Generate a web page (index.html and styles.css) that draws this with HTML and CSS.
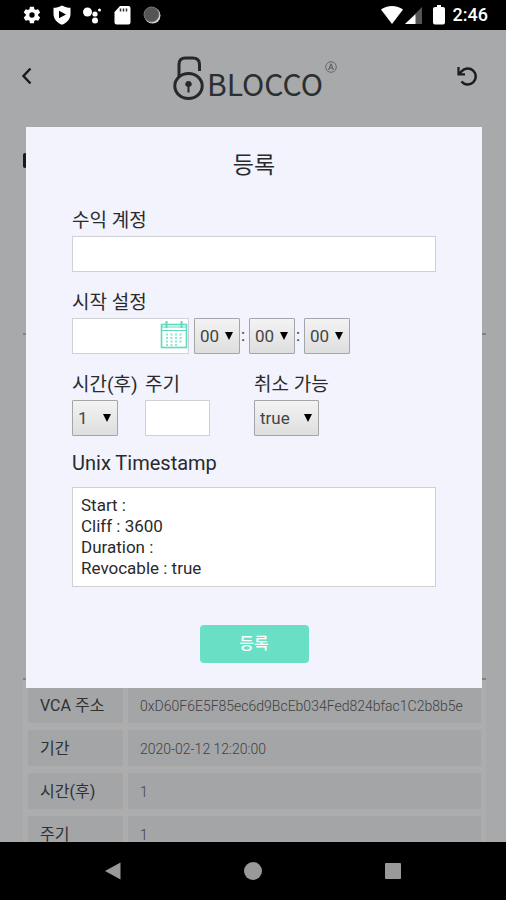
FILE: index.html
```html
<!DOCTYPE html>
<html lang="ko">
<head>
<meta charset="utf-8">
<meta name="viewport" content="width=device-width, initial-scale=1">
<title>BLOCCO</title>
<link rel="stylesheet" href="styles.css">
</head>
<body>
<div class="status">
  <div class="status-icons">
    <svg width="20" height="20" viewBox="0 0 24 24" fill="#fff"><path d="M19.4 13a7.500 7.500 0 0 0 0-2l2.100-1.600a.5.5 0 0 0 .1-.6l-2-3.500a.5.5 0 0 0-.6-.2l-2.500 1a7.300 7.300 0 0 0-1.700-1l-.4-2.600a.5.5 0 0 0-.5-.5h-4a.5.5 0 0 0-.5.5L9 5.100a7.300 7.300 0 0 0-1.700 1l-2.500-1a.5.5 0 0 0-.6.2l-2 3.500a.5.5 0 0 0 .1.6L4.500 11a7.500 7.500 0 0 0 0 2l-2.200 1.600a.5.5 0 0 0-.1.6l2 3.500c.1.200.4.300.6.200l2.500-1a7.300 7.300 0 0 0 1.700 1l.4 2.600c0 .3.200.5.5.5h4c.3 0 .5-.2.5-.5l.4-2.600a7.300 7.300 0 0 0 1.700-1l2.500 1c.2.100.5 0 .6-.2l2-3.500a.5.5 0 0 0-.1-.6zM12 15.200a3.200 3.200 0 1 1 0-6.400 3.200 3.200 0 0 1 0 6.400z"/></svg>
    <svg width="20" height="20" viewBox="0 0 20 20"><path fill="#fff" d="M10 .5c3 1.800 5.500 2.300 8.500 2.300V9c0 5-3.500 8.800-8.500 10.800C5 17.800 1.500 14 1.500 9V2.800c3 0 5.500-.5 8.500-2.300z"/><path d="M7 5.800v7.500l7-3.800z"/></svg>
    <svg width="20" height="20" viewBox="0 0 20 20" fill="#fff"><circle cx="5.500" cy="7" r="4.500"/><circle cx="13" cy="9" r="2.600"/><circle cx="17.500" cy="5" r="1.500"/><circle cx="13" cy="15.500" r="3"/></svg>
    <svg width="20" height="20" viewBox="0 0 20 20"><path fill="#fff" d="M8 1h8.500a2 2 0 0 1 2 2v14.500a2 2 0 0 1-2 2h-12a2 2 0 0 1-2-2V7z"/><path stroke="#333" stroke-width="1.500" d="M8.500 3.500v3M11.500 3.500v3M14.500 3.500v3"/></svg>
    <svg width="20" height="20" viewBox="0 0 20 20"><circle cx="10.500" cy="10.500" r="8" fill="#ddd"/><circle cx="9.500" cy="9.500" r="7.500" fill="#555" stroke="#777"/></svg>
  </div>
  <div class="status-right">
    <svg width="22" height="20" viewBox="0 0 22 20"><path fill="#fff" d="M0 4.500C6-.2 16-.2 22 4.500L11 19z"/></svg>
    <svg width="17" height="20" viewBox="0 0 17 20"><path fill="#555" d="M17 2v17H0z"/><path fill="#fff" d="M10.500 9.300V19H0z"/></svg>
    <svg class="battery" width="12" height="20" viewBox="0 0 12 20"><path fill="#fff" d="M4 0h4v2h2a2 2 0 0 1 2 2v13.500a2 2 0 0 1-2 2H2a2 2 0 0 1-2-2V4a2 2 0 0 1 2-2h2z"/></svg>
    <span>2:46</span>
  </div>
</div>

<main class="screen">
  <header class="top">
    <button class="icon-btn" aria-label="뒤로"><svg width="10" height="18" viewBox="0 0 10 18"><path d="M8.500 1.500 1.500 9l7 7.500" fill="none" stroke="#1c1c1c" stroke-width="2.400"/></svg></button>
    <div class="logo">
      <svg width="32" height="46" viewBox="0 0 32 46" fill="none" stroke="#26282a" stroke-width="3"><path d="M6 22V9.500Q6 3 12.500 3h7Q26.500 3 26.500 9.500V16"/><ellipse cx="15.500" cy="31" rx="13.700" ry="12.500"/><circle cx="15.500" cy="29" r="3" fill="#26282a" stroke="none"/><path d="M15.500 29v8.500M12.500 29.500h6" stroke-width="2"/></svg>
      <span class="brand">BLOCCO</span>
      <svg width="12" height="12" viewBox="0 0 12 12" fill="none" stroke="#55585a" class="mark"><circle cx="6" cy="6" r="5.300" stroke-width=".8"/><path d="M3.500 9 6 2.800 8.500 9M4.400 7h3.200"/></svg>
    </div>
    <button class="icon-btn end" aria-label="새로고침"><svg width="21" height="21" viewBox="0 0 21 21" fill="none" stroke="#1c1c1c" stroke-width="2.500"><path d="M4.500 15.500a8 8 0 1 0 0-10L2 8"/><path d="M1.500 1v7.300H8" stroke-width="2.200"/></svg></button>
  </header>
  <div class="page">
    <section class="panel summary"><span class="bar"></span></section>
    <section class="panel detail"></section>
    <table class="info">
      <tr><th scope="row">VCA 주소</th><td>0xD60F6E5F85ec6d9BcEb034Fed824bfac1C2b8b5e</td></tr>
      <tr><th scope="row">기간</th><td>2020-02-12 12:20:00</td></tr>
      <tr><th scope="row">시간(후)</th><td>1</td></tr>
      <tr><th scope="row">주기</th><td>1</td></tr>
    </table>
  </div>

  <form class="modal" role="dialog" aria-labelledby="title">
    <h1 id="title">등록</h1>
    <div class="field">
      <label for="account">수익 계정</label>
      <input id="account" type="text">
    </div>
    <div class="field">
      <label for="date">시작 설정</label>
      <div class="row">
        <span class="date"><input id="date" type="text">
          <svg width="28" height="28" viewBox="0 0 28 28" fill="none" stroke="#5fdabd" stroke-width="1.600"><rect x="1.500" y="3.500" width="25" height="23"/><path d="M1.500 9.500h25M1.500 6h25" stroke-width="1.200"/><path d="M6.500 0v7M21.500 0v7" stroke-width="2"/><path d="M6 13.500h17M6 17h17M6 20.500h17M6 24h12" stroke-width="2" stroke-dasharray="2 2.500" opacity=".7"/></svg>
        </span>
        <span class="select"><select aria-label="시"><option>00</option></select><svg width="8" height="8" viewBox="0 0 8 8"><path d="M0 0h8L4 8z"/></svg></span>
        <span class="colon">:</span>
        <span class="select"><select aria-label="분"><option>00</option></select><svg width="8" height="8" viewBox="0 0 8 8"><path d="M0 0h8L4 8z"/></svg></span>
        <span class="colon">:</span>
        <span class="select"><select aria-label="초"><option>00</option></select><svg width="8" height="8" viewBox="0 0 8 8"><path d="M0 0h8L4 8z"/></svg></span>
      </div>
    </div>
    <div class="trio">
      <div><label for="after">시간(후)</label><span class="select"><select id="after"><option>1</option></select><svg width="8" height="8" viewBox="0 0 8 8"><path d="M0 0h8L4 8z"/></svg></span></div>
      <div><label for="cycle">주기</label><input id="cycle" class="short" type="text"></div>
      <div><label for="revocable">취소 가능</label><span class="select wide"><select id="revocable"><option>true</option></select><svg width="8" height="8" viewBox="0 0 8 8"><path d="M0 0h8L4 8z"/></svg></span></div>
    </div>
    <h2>Unix Timestamp</h2>
    <div class="stamp">
      <p>Start :</p>
      <p>Cliff : 3600</p>
      <p>Duration :</p>
      <p>Revocable : true</p>
    </div>
    <button class="submit" type="button">등록</button>
  </form>
</main>

<nav class="nav">
  <button aria-label="뒤로"><svg width="20" height="20" viewBox="0 0 20 20" fill="#999"><path d="M17.500 1.500v17L2 10z"/></svg></button>
  <button aria-label="홈"><svg width="20" height="20" viewBox="0 0 20 20" fill="#999"><circle cx="10" cy="10" r="9"/></svg></button>
  <button aria-label="최근 앱"><svg width="20" height="20" viewBox="0 0 20 20" fill="#999"><rect x="2" y="2" width="16" height="16" rx="1"/></svg></button>
</nav>
</body>
</html>
```
FILE: styles.css
```css
* { box-sizing: border-box; }

body {
  margin: 0;
  height: 100vh;
  display: flex;
  flex-direction: column;
  background: #000;
  color: #2a2a2c;
  font-family: Roboto, "Noto Sans CJK KR", sans-serif;
}

svg { display: block; flex: none; }
button { border: 0; padding: 0; background: none; font: inherit; }
h1, h2, p { margin: 0; font-weight: 400; }

.status {
  flex: none;
  height: 30px;
  display: flex;
  justify-content: space-between;
  align-items: center;
  padding: 0 18px 0 22px;
  color: #fff;
}
.status-icons { display: flex; gap: 10px; }
.status-right { display: flex; align-items: center; gap: 2px; font-size: 18px; font-weight: 500; line-height: 20px; }
.battery { margin: 0 6px 0 9px; }

.screen {
  flex: 1;
  min-height: 0;
  position: relative;
  overflow: hidden;
  background: #a7a9aa;
}

.top {
  display: grid;
  grid-template-columns: 1fr auto 1fr;
  align-items: center;
  height: 92px;
  padding: 0 28px 0 22px;
}
.icon-btn { justify-self: start; }
.end { justify-self: end; }
.logo { display: flex; align-items: flex-end; gap: 2px; padding: 4px 0 0 10px; }
.brand {
  font-family: "Noto Sans CJK KR", sans-serif;
  font-size: 30px;
  line-height: 36px;
  color: #2c2e30;
}
.mark { align-self: flex-start; margin-top: 6px; }

.page { padding: 0 20px 0 23px; }
.panel { border-bottom: 2px solid #7f8182; }
.summary { height: 213px; padding-top: 31px; }
.detail { height: 345px; }
.bar { display: block; width: 4px; height: 15px; border-radius: 2px; background: #1a1a1a; }

.info {
  width: 100%;
  border-spacing: 5px 7px;
  background: #adadad;
}
.info th, .info td { height: 36px; padding: 1px 12px 0; background: #a3a5a6; text-align: left; }
.info th { width: 95px; font-size: 16px; font-weight: 400; line-height: 24px; color: #2f3132; white-space: nowrap; }
.info td { font-size: 14px; font-weight: 300; line-height: 24px; color: #3f4142; }

.modal {
  position: absolute;
  top: 97px;
  left: 26px;
  right: 24px;
  padding: 22px 46px 25px;
  background: #f2f3fc;
}
.modal h1 { font-size: 23px; line-height: 34px; text-align: center; margin-bottom: 23px; }
.modal label { display: block; font-size: 19px; line-height: 30px; white-space: nowrap; }
.modal h2 { font-size: 20px; line-height: 30px; margin: 12px 0 9px; }

.field { margin-bottom: 16px; }
.modal input {
  display: block;
  width: 100%;
  height: 36px;
  padding: 0 8px;
  border: 1px solid #cfd1d6;
  background: #fff;
  font: 17px Roboto, sans-serif;
}
.row { display: flex; }
.date { position: relative; width: 117px; margin-right: 5px; }
.date svg { position: absolute; right: 1px; top: 3px; }
.colon { width: 9px; padding-left: 1px; font-size: 17px; line-height: 34px; }

.select { position: relative; display: block; width: 46px; height: 36px; }
.select.wide { width: 65px; }
.select select {
  appearance: none;
  width: 100%;
  height: 100%;
  padding: 0 5px;
  border: 1px solid #a4a5a8;
  border-radius: 1px;
  background: linear-gradient(#f3f3f3, #dedede);
  color: #444;
  font: 17px Roboto, sans-serif;
}
.select svg { position: absolute; right: 7px; top: 14px; pointer-events: none; }

.trio { display: grid; grid-template-columns: 73px 109px 1fr; }
.modal .short { width: 65px; }

.stamp {
  padding: 7px 8px;
  border: 1px solid #cfd1d0;
  background: #fff;
  font-size: 17px;
  line-height: 21px;
}
.submit {
  display: block;
  width: 109px;
  height: 38px;
  margin: 38px auto 0;
  border-radius: 4px;
  background: #69e0c5;
  color: #fff;
  font-size: 16px;
  font-weight: 500;
  line-height: 24px;
}

.nav {
  flex: none;
  height: 58px;
  display: flex;
  justify-content: center;
  align-items: center;
  gap: 120px;
}
```
